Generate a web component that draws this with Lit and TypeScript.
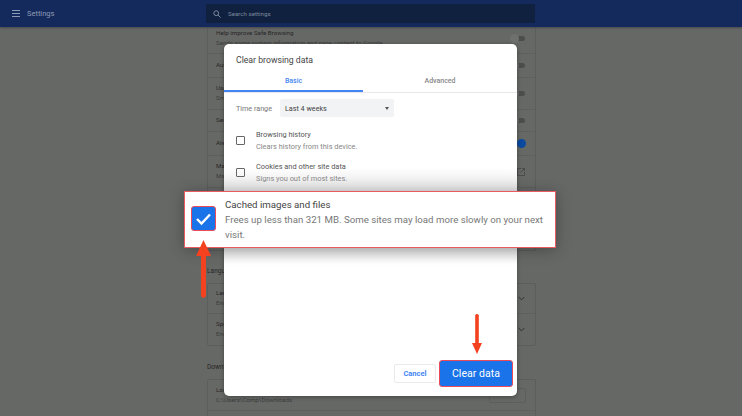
import { LitElement, html, css } from "lit";
import { customElement } from "lit/decorators.js";

@customElement("app-root")
export class AppRoot extends LitElement {
  static styles = css`
    :host { display: block; position: relative; width: 742px; height: 416px; overflow: hidden; background: #666866; font-family: Roboto, "Liberation Sans", sans-serif; color: #222; }
    .top { height: 27px; box-sizing: border-box; background: #152a5c; display: flex; align-items: center; box-shadow: 0 1px 2px rgba(0,0,0,.3); position: relative; }
    .brand { width: 206px; display: flex; align-items: center; gap: 7px; padding-left: 12px; box-sizing: border-box; color: #8d9ab5; font-size: 7.5px; }
    .search { width: 329px; height: 19px; background: #10213f; display: flex; align-items: center; gap: 7px; padding-left: 7px; box-sizing: border-box; color: #7b879b; font-size: 6.2px; }
    .col { width: 329px; margin-left: 207px; font-size: 6.2px; color: #262626; }
    .card { border: 1px solid #5c5e5c; border-radius: 2px; box-sizing: border-box; width: 329px; }
    .first { height: 224px; border-top: none; }
    .row { display: flex; align-items: center; justify-content: space-between; padding: 0 10px 0 8px; box-sizing: border-box; border-bottom: 1px solid #5e605e; white-space: nowrap; }
    .row.last { border-bottom: none; }
    .stack { display: flex; flex-direction: column; gap: 3px; line-height: 7px; }
    .sub { color: #3c3d3c; }
    .heading { font-size: 6.6px; box-sizing: border-box; line-height: 8px; }
    .toggle { position: relative; width: 12px; height: 5px; border-radius: 3px; background: #4c4d4c; }
    .toggle::before { content: ""; position: absolute; left: -3px; top: -2px; width: 9px; height: 9px; border-radius: 50%; background: #6e706e; }
    .knob { width: 9px; height: 9px; border-radius: 50%; background: #0b4a9e; margin-right: -1px; }
    .dlbtn { width: 37px; height: 15px; border: 1px solid #5c5e5c; border-radius: 2px; box-sizing: border-box; margin-right: -1px; }
    .modal { position: absolute; left: 224px; top: 44px; width: 293px; height: 352px; background: #fff; border-radius: 5px; box-shadow: 0 1px 4px rgba(0,0,0,.35); }
    .title { font-size: 8.7px; color: #444; padding: 11px 0 0 12px; height: 25px; box-sizing: border-box; line-height: 10px; }
    .tabs { display: flex; height: 23px; border-bottom: 1px solid #e8e8e8; font-size: 7px; font-weight: 500; }
    .tab { display: flex; align-items: center; justify-content: center; box-sizing: border-box; color: #888; height: 23px; }
    .tab.on { color: #4285f4; border-bottom: 2px solid #4285f4; width: 139px; padding-top: 2px; }
    .tab.off { width: 154px; padding-top: 1px; }
    .range { display: flex; align-items: center; padding: 6px 0 0 12px; font-size: 7.2px; color: #777; }
    .label { width: 44px; }
    .select { width: 114px; height: 18px; background: #f1f3f4; border-radius: 2px; color: #444; display: flex; align-items: center; justify-content: space-between; padding: 0 5px; box-sizing: border-box; }
    .caret { width: 0; height: 0; border: 2.5px solid transparent; border-top: 3px solid #555; border-bottom: none; }
    .opts { padding-top: 7px; position: relative; z-index: 1; }
    .opt { display: flex; align-items: center; padding-left: 12px; gap: 11px; height: 32px; }
    .box { width: 7px; height: 7px; border: 1.5px solid #666; border-radius: 1px; }
    .t1 { font-size: 7.4px; color: #555; line-height: 9px; }
    .t2 { font-size: 7.4px; color: #888; line-height: 9px; margin-top: 3px; }
    .fade { position: absolute; left: 0; right: 0; top: 124px; height: 24px; background: linear-gradient(#fff, #e2e2e2); }
    .fade2 { position: absolute; left: 0; right: 0; top: 204px; height: 16px; background: linear-gradient(#dedede, #fff); }
    .cancel { position: absolute; left: 170px; top: 320px; width: 42px; height: 19px; border: 1px solid #eaeaea; border-radius: 2px; color: #4285f4; font-size: 7.5px; font-weight: 700; display: flex; align-items: center; justify-content: center; box-sizing: border-box; }
    .clear { position: absolute; left: 215px; top: 316px; width: 74px; height: 27px; background: #1a73e8; border: 1px solid #ea4a5a; border-radius: 3px; color: #fff; font-size: 10.5px; display: flex; align-items: center; justify-content: center; box-sizing: border-box; letter-spacing: .05px; }
    .strip { position: absolute; left: 184px; top: 191px; width: 372px; height: 57px; box-sizing: border-box; background: #fff; border: 1px solid #ea5a62; box-shadow: 0 2px 14px rgba(0,0,0,.3); display: flex; padding: 6px 0 0 6px; gap: 9px; }
    .bigbox { width: 25px; height: 25px; box-sizing: border-box; margin-top: 8px; background: #1a73e8; border: 1px solid #ea4a5a; border-radius: 3px; display: flex; align-items: center; justify-content: center; }
    .strip h3 { margin: 0; font-size: 9.7px; font-weight: 400; color: #444; line-height: 13px; }
    .strip p { margin: 1px 0 0; font-size: 9.7px; color: #777; line-height: 15px; width: 326px; }
    .arrow { position: absolute; }
  `;

  private row(h: number, a: string, b: string, ctrl: unknown, extra = "", pad = 0) {
    return html`<div class="row ${extra}" style="height:${h}px;padding-bottom:${pad}px">
      <div class="stack"><span>${a}</span>${b ? html`<span class="sub">${b}</span>` : ""}</div>${ctrl}
    </div>`;
  }

  render() {
    const toggle = html`<span class="toggle"></span>`;
    const chevron = html`<svg width="7" height="5" viewBox="0 0 7 5" fill="none" stroke="#2e2f2e" stroke-width="1"><path d="M.7 1l2.8 2.8L6.3 1"/></svg>`;
    const ext = html`<svg width="8" height="8" viewBox="0 0 8 8" fill="none" stroke="#444" stroke-width=".8"><path d="M4 .5H.5v7h7V4M3.5 4.5L7.5.5M5 .5h2.5V3"/></svg>`;
    return html`
      <div class="top">
        <div class="brand">
          <svg width="8" height="7" viewBox="0 0 8 7"><path d="M0 .5h8M0 3.5h8M0 6.5h8" stroke="#8d9ab5" stroke-width="1"/></svg>
          <span>Settings</span>
        </div>
        <div class="search">
          <svg width="8" height="8" viewBox="0 0 8 8" fill="none" stroke="#7b879b"><circle cx="3.2" cy="3.2" r="2.4"/><path d="M5 5l2.6 2.6"/></svg>
          <span>Search settings</span>
        </div>
      </div>
      <div class="col">
        <div class="card first">
          ${this.row(27, "Help improve Safe Browsing", "Sends some system information and page content to Google", toggle, "", 3)}
          ${this.row(24, "Autofill", "", toggle)}
          ${this.row(32, "Use a prediction service", "Smart suggestions", toggle)}
          ${this.row(22, "Search engine", "", toggle)}
          ${this.row(24, "Always show", "", html`<span class="knob"></span>`)}
          ${this.row(32, "Manage", "Manage", ext)}
        </div>
        <div class="heading" style="height:32px;padding-top:16px">Languages</div>
        <div class="card">
          ${this.row(30, "Language", "English", chevron)}
          ${this.row(31, "Spell check", "English", chevron, "last")}
        </div>
        <div class="heading" style="height:33px;padding-top:17px">Downloads</div>
        <div class="card" style="height:60px;border-bottom:none">
          ${this.row(31, "Location", "C:\\Users\\Comp\\Downloads", html`<span class="dlbtn"></span>`)}
        </div>
      </div>

      <div class="modal">
        <div class="fade"></div>
        <div class="fade2"></div>
        <div class="title">Clear browsing data</div>
        <div class="tabs"><div class="tab on">Basic</div><div class="tab off">Advanced</div></div>
        <div class="range"><span class="label">Time range</span><div class="select"><span>Last 4 weeks</span><span class="caret"></span></div></div>
        <div class="opts">
          <div class="opt"><span class="box"></span><div><div class="t1">Browsing history</div><div class="t2">Clears history from this device.</div></div></div>
          <div class="opt"><span class="box"></span><div><div class="t1">Cookies and other site data</div><div class="t2">Signs you out of most sites.</div></div></div>
        </div>
        <div class="cancel">Cancel</div>
        <div class="clear">Clear data</div>
      </div>

      <div class="strip">
        <div class="bigbox"><svg width="17" height="14" viewBox="0 0 17 14" fill="none"><path d="M2 7l4.5 4.5L15 2.5" stroke="#fff" stroke-width="2.4"/></svg></div>
        <div>
          <h3>Cached images and files</h3>
          <p>Frees up less than 321 MB. Some sites may load more slowly on your next visit.</p>
        </div>
      </div>

      <svg class="arrow" style="left:195px;top:239px" width="17" height="60" viewBox="0 0 17 60"><path d="M8.5 1L16 17H11V57Q8.5 61 6 57V17H1Z" fill="#f4411f"/></svg>
      <svg class="arrow" style="left:471px;top:313px" width="12" height="43" viewBox="0 0 12 43"><path d="M4.2 2Q6 0 7.8 2V30H11L6 41L1 30H4.2Z" fill="#f4411f"/></svg>
    `;
  }
}
